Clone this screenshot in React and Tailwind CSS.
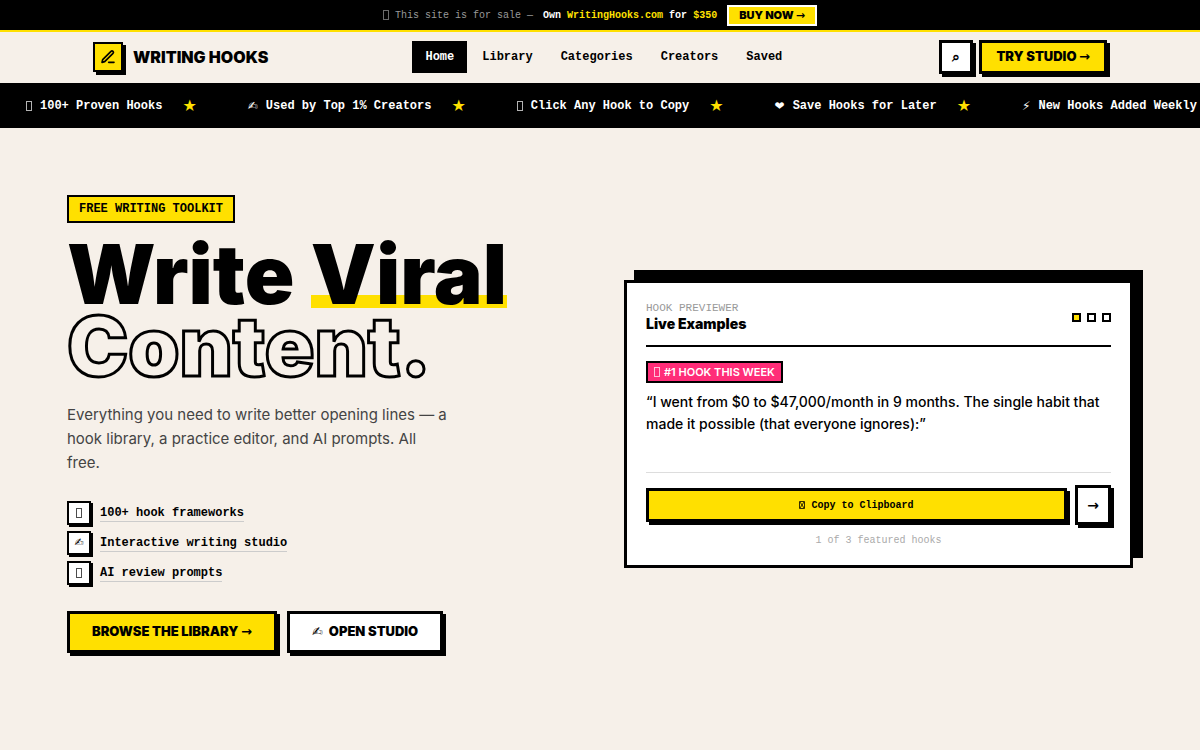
const navLinks = ["Home", "Library", "Categories", "Creators", "Saved"];

const tickerItems = [
  { icon: "🔥", text: "100+ Proven Hooks" },
  { icon: "✍", text: "Used by Top 1% Creators" },
  { icon: "📋", text: "Click Any Hook to Copy" },
  { icon: "❤", text: "Save Hooks for Later" },
  { icon: "⚡", text: "New Hooks Added Weekly" },
];

const features = [
  { icon: "📚", text: "100+ hook frameworks" },
  { icon: "✍", text: "Interactive writing studio" },
  { icon: "🤖", text: "AI review prompts" },
];

// emoji without a glyph show up as a thin empty box
function Icon({ icon, className = "" }) {
  if (icon.length > 1) {
    return (
      <span
        aria-hidden="true"
        className={`inline-block h-[10px] w-[6px] shrink-0 border border-current opacity-70 ${className}`}
      />
    );
  }
  return (
    <span className={`font-['DejaVu_Sans',sans-serif] font-normal ${className}`}>
      {icon}
    </span>
  );
}

function Arrow() {
  return <span className="font-['DejaVu_Sans',sans-serif] font-bold">→</span>;
}

function SaleBar() {
  return (
    <div className="flex h-8 items-center justify-center border-b-2 border-[#ffe000] bg-black font-['Liberation_Mono',monospace] text-[10px] text-white">
      <Icon icon="🔥" className="mr-1.5 text-[#999]" />
      <span className="text-[#999]">This site is for sale —</span>
      <span className="ml-2.5 font-bold">
        Own <span className="text-[#ffe000]">WritingHooks.com</span> for{" "}
        <span className="text-[#ffe000]">$350</span>
      </span>
      <a
        href="#buy"
        className="ml-2.5 border-2 border-white bg-[#ffe000] px-2.5 font-['Inter',sans-serif] text-[11px] leading-4 font-black text-black"
      >
        BUY NOW <Arrow />
      </a>
    </div>
  );
}

function Header() {
  return (
    <header className="flex h-[51px] items-center justify-between px-[93px] pb-0.5">
      <a href="#home" className="flex items-center gap-2.5">
        <span className="flex h-[30px] w-[30px] items-center justify-center border-2 border-black bg-[#ffe000] shadow-[3px_3px_0_#000]">
          <svg
            width="16"
            height="16"
            viewBox="0 0 24 24"
            fill="none"
            stroke="black"
            strokeWidth="2.5"
            strokeLinecap="round"
            strokeLinejoin="round"
          >
            <path d="M13 20h8" />
            <path d="M16.5 3.5a2.12 2.12 0 0 1 3 3L7 19l-4 1 1-4Z" />
          </svg>
        </span>
        <span className="font-['Inter',sans-serif] text-base font-black">
          WRITING HOOKS
        </span>
      </a>
      <nav className="flex gap-0.5 font-['Liberation_Mono',monospace] text-xs font-bold">
        {navLinks.map((link) => (
          <a
            key={link}
            href={`#${link.toLowerCase()}`}
            className={`px-[13px] py-2 ${link === "Home" ? "bg-black text-white" : ""}`}
          >
            {link}
          </a>
        ))}
      </nav>
      <div className="flex items-center gap-1.5">
        <button
          aria-label="Search"
          className="h-[34px] w-[34px] border-[3px] border-black bg-white font-['DejaVu_Sans',sans-serif] text-sm font-bold shadow-[3px_3px_0_#000]"
        >
          ⌕
        </button>
        <button className="h-[34px] border-[3px] border-black bg-[#ffe000] px-3.5 font-['Inter',sans-serif] text-[13px] font-black shadow-[3px_3px_0_#000]">
          TRY STUDIO <Arrow />
        </button>
      </div>
    </header>
  );
}

function Ticker() {
  return (
    <div className="flex h-[45px] items-center overflow-hidden bg-black pl-[26px] font-['Liberation_Mono',monospace] text-xs font-bold whitespace-nowrap text-white">
      {tickerItems.map((item, i) => (
        <div key={item.text} className="flex shrink-0 items-center">
          <Icon icon={item.icon} className="mr-2" />
          <span>{item.text}</span>
          {i < tickerItems.length - 1 && (
            <span className="mr-[51px] ml-5 font-['DejaVu_Sans',sans-serif] text-base text-[#ffe000]">
              ★
            </span>
          )}
        </div>
      ))}
    </div>
  );
}

function Previewer() {
  return (
    <div className="border-[3px] border-black bg-white px-[19px] pt-[18px] pb-4 shadow-[10px_-10px_0_#000]">
      <div className="flex items-center justify-between border-b-2 border-black pb-3">
        <div>
          <div className="font-['Liberation_Mono',monospace] text-[11px] leading-[14px] text-[#999]">
            HOOK PREVIEWER
          </div>
          <h2 className="font-['Inter',sans-serif] text-sm leading-[18px] font-black">
            Live Examples
          </h2>
        </div>
        <div className="flex gap-1.5">
          <span className="h-[9px] w-[9px] border-2 border-black bg-[#ffe000]" />
          <span className="h-[9px] w-[9px] border-2 border-black" />
          <span className="h-[9px] w-[9px] border-2 border-black" />
        </div>
      </div>
      <div className="mt-3.5 flex h-[22px] w-fit items-center border-2 border-black bg-[#ff2d78] px-1.5 font-['Inter',sans-serif] text-[11px] font-semibold text-white">
        <Icon icon="🔥" className="mr-1" />
        #1 HOOK THIS WEEK
      </div>
      <p className="mt-2 h-[82px] border-b border-[#ddd] font-['Inter',sans-serif] text-sm leading-[22px] font-medium">
        “I went from $0 to $47,000/month in 9 months. The single habit that
        made it possible (that everyone ignores):”
      </p>
      <div className="mt-3 flex items-center gap-2">
        <button className="flex h-[34px] flex-1 items-center justify-center border-[3px] border-black bg-[#ffe000] font-['Liberation_Mono',monospace] text-[10px] font-bold shadow-[3px_3px_0_#000]">
          <svg
            width="6"
            height="8"
            viewBox="0 0 6 8"
            fill="none"
            stroke="black"
            strokeWidth="0.8"
            className="mr-1.5"
          >
            <path d="M0.5 0.5h5v7h-5ZM1 1l4 6M5 1L1 7" />
          </svg>
          Copy to Clipboard
        </button>
        <button
          aria-label="Next hook"
          className="h-10 w-9 border-[3px] border-black bg-white text-sm shadow-[3px_3px_0_#000]"
        >
          <Arrow />
        </button>
      </div>
      <div className="mt-2 text-center font-['Liberation_Mono',monospace] text-[10px] leading-4 text-[#aaa]">
        1 of 3 featured hooks
      </div>
    </div>
  );
}

function Hero() {
  return (
    <main className="grid grid-cols-2 items-center gap-12 px-[67px] py-[67px]">
      <div>
        <div className="flex h-7 w-fit items-center border-2 border-black bg-[#ffe000] px-2.5 font-['Liberation_Mono',monospace] text-xs font-bold">
          FREE WRITING TOOLKIT
        </div>
        <h1 className="mt-4 font-['Inter',sans-serif] text-[82px] leading-[72px] font-black whitespace-nowrap">
          Write{" "}
          <span className="bg-[linear-gradient(to_top,transparent_16%,#ffe000_16%,#ffe000_29%,transparent_29%)]">
            Viral
          </span>
          <br />
          <span className="text-transparent [-webkit-text-stroke:3px_#000]">
            Content.
          </span>
        </h1>
        <p className="mt-5 max-w-[384px] font-['Inter',sans-serif] text-[15px] leading-6 text-[#444]">
          Everything you need to write better opening lines — a hook library, a
          practice editor, and AI prompts. All free.
        </p>
        <ul className="mt-[26px] flex flex-col gap-1.5 font-['Liberation_Mono',monospace] text-xs font-bold">
          {features.map((feature) => (
            <li key={feature.text} className="flex items-center gap-[9px]">
              <span className="flex h-6 w-6 items-center justify-center border-2 border-black bg-white text-[11px] shadow-[2px_2px_0_#000]">
                <Icon icon={feature.icon} />
              </span>
              <a href="#features" className="border-b border-[#ccc]">
                {feature.text}
              </a>
            </li>
          ))}
        </ul>
        <div className="mt-[26px] flex gap-2.5 font-['Inter',sans-serif] text-[13px] font-black">
          <button className="h-[42px] border-[3px] border-black bg-[#ffe000] px-[22px] shadow-[3px_3px_0_#000]">
            BROWSE THE LIBRARY <Arrow />
          </button>
          <button className="flex h-[42px] items-center border-[3px] border-black bg-white px-[22px] shadow-[3px_3px_0_#000]">
            <Icon icon="✍" className="mr-1.5" />
            OPEN STUDIO
          </button>
        </div>
      </div>
      <Previewer />
    </main>
  );
}

function App() {
  return (
    <div className="min-h-screen overflow-x-hidden bg-[#f6f0e9] text-black">
      <SaleBar />
      <Header />
      <Ticker />
      <Hero />
    </div>
  );
}

export default App;
